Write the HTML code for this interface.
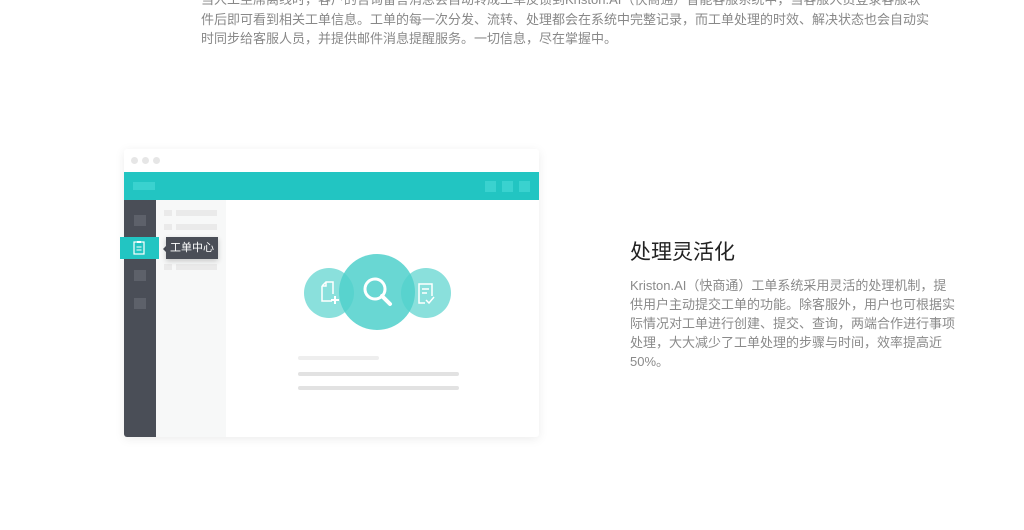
<!DOCTYPE html><html><head><meta charset="utf-8"><style>
body{margin:0;width:1024px;height:530px;background:#fff;position:relative;overflow:hidden;font-family:"Liberation Sans","Noto Sans CJK SC",sans-serif}
.a{position:absolute}
.top{left:201px;top:-10px;width:760px;font-size:13px;line-height:19.5px;color:#888;white-space:nowrap}
.r{left:630px;top:276px;width:360px;font-size:13px;line-height:19px;color:#8a8a8a;white-space:nowrap}
</style></head><body>
<div class="a top">当人工坐席离线时，客户的咨询留言消息会自动转成工单反馈到Kriston.AI（快商通）智能客服系统中，当客服人员登录客服软<br>件后即可看到相关工单信息。工单的每一次分发、流转、处理都会在系统中完整记录，而工单处理的时效、解决状态也会自动实<br>时同步给客服人员，并提供邮件消息提醒服务。一切信息，尽在掌握中。</div>
<div class="a" style="left:630px;top:236px;font-size:21px;color:#222">处理灵活化</div>
<div class="a r">Kriston.AI（快商通）工单系统采用灵活的处理机制，提<br>供用户主动提交工单的功能。除客服外，用户也可根据实<br>际情况对工单进行创建、提交、查询，两端合作进行事项<br>处理，大大减少了工单处理的步骤与时间，效率提高近<br>50%。</div>
<div class="a" style="left:124px;top:149px;width:415px;height:288px;background:#fff;border-radius:3px;box-shadow:0 2px 10px rgba(0,0,0,.08)"></div>
<div class="a" style="left:131px;top:157px;width:7px;height:7px;border-radius:50%;background:#e6e6e6"></div>
<div class="a" style="left:142px;top:157px;width:7px;height:7px;border-radius:50%;background:#e6e6e6"></div>
<div class="a" style="left:153px;top:157px;width:7px;height:7px;border-radius:50%;background:#e6e6e6"></div>
<div class="a" style="left:124px;top:172px;width:415px;height:28px;background:#22c5c2"></div>
<div class="a" style="left:133px;top:182px;width:22px;height:8px;background:#3ad2cf"></div>
<div class="a" style="left:485px;top:181px;width:11px;height:11px;background:#3ad2cf"></div>
<div class="a" style="left:502px;top:181px;width:11px;height:11px;background:#3ad2cf"></div>
<div class="a" style="left:519px;top:181px;width:11px;height:11px;background:#3ad2cf"></div>
<div class="a" style="left:124px;top:200px;width:32px;height:237px;background:#4a4e57;border-radius:0 0 0 3px"></div>
<div class="a" style="left:156px;top:200px;width:70px;height:237px;background:#f7f8f8"></div>
<div class="a" style="left:134px;top:215px;width:12px;height:11px;background:#5d616a"></div>
<div class="a" style="left:134px;top:270px;width:12px;height:11px;background:#5d616a"></div>
<div class="a" style="left:134px;top:298px;width:12px;height:11px;background:#5d616a"></div>
<div class="a" style="left:164px;top:210px;width:8px;height:6px;background:#eaeaea"></div>
<div class="a" style="left:176px;top:210px;width:41px;height:6px;background:#eaeaea"></div>
<div class="a" style="left:164px;top:224px;width:8px;height:6px;background:#eaeaea"></div>
<div class="a" style="left:176px;top:224px;width:41px;height:6px;background:#eaeaea"></div>
<div class="a" style="left:164px;top:264px;width:8px;height:6px;background:#eaeaea"></div>
<div class="a" style="left:176px;top:264px;width:41px;height:6px;background:#eaeaea"></div>
<div class="a" style="left:120px;top:237px;width:39px;height:22px;background:#22c5c2"></div>
<svg class="a" style="left:132px;top:240px" width="14" height="16"><rect x="2" y="2" width="10" height="12" fill="none" stroke="#fff" stroke-width="1.2"/><rect x="5" y="1" width="4" height="2" fill="#fff"/><path d="M4.5 7h5M4.5 10h5" stroke="#fff"/></svg>
<div class="a" style="left:163px;top:245px;width:0;height:0;border:4px solid transparent;border-right-color:#4a4e57;border-left:0"></div>
<div class="a" style="left:166px;top:237px;width:52px;height:22px;background:#4a4e57;color:#fff;font-size:11px;line-height:22px;text-align:center;box-shadow:0 2px 5px rgba(0,0,0,.2)">工单中心</div>
<svg class="a" style="left:300px;top:250px" width="160" height="90">
<circle cx="29" cy="43" r="25" fill="#8ae0dc"/>
<circle cx="126" cy="43" r="25" fill="#8ae0dc"/>
<circle cx="77" cy="42" r="38" fill="#4fd0cb" opacity=".85"/>
<path d="M22 36l4-4h7v12M22 36v15h10M22 36h4v-4" fill="none" stroke="#fff" stroke-width="1.5"/><path d="M35 46v8M31 50h8" stroke="#fff" stroke-width="2"/>
<circle cx="75" cy="39" r="10" fill="none" stroke="#fff" stroke-width="3"/><path d="M82 46l8 8" stroke="#fff" stroke-width="4" stroke-linecap="round"/>
<path d="M132 46v-12h-13v19h6M122 39h7M122 43h5" fill="none" stroke="#fff" stroke-width="1.5"/><path d="M126 50l3 3 5-6" fill="none" stroke="#fff" stroke-width="1.5"/>
</svg>
<div class="a" style="left:298px;top:356px;width:81px;height:4px;background:#eee;border-radius:2px"></div>
<div class="a" style="left:298px;top:372px;width:161px;height:4px;background:#e2e2e2;border-radius:2px"></div>
<div class="a" style="left:298px;top:386px;width:161px;height:4px;background:#e2e2e2;border-radius:2px"></div>
</body></html>
